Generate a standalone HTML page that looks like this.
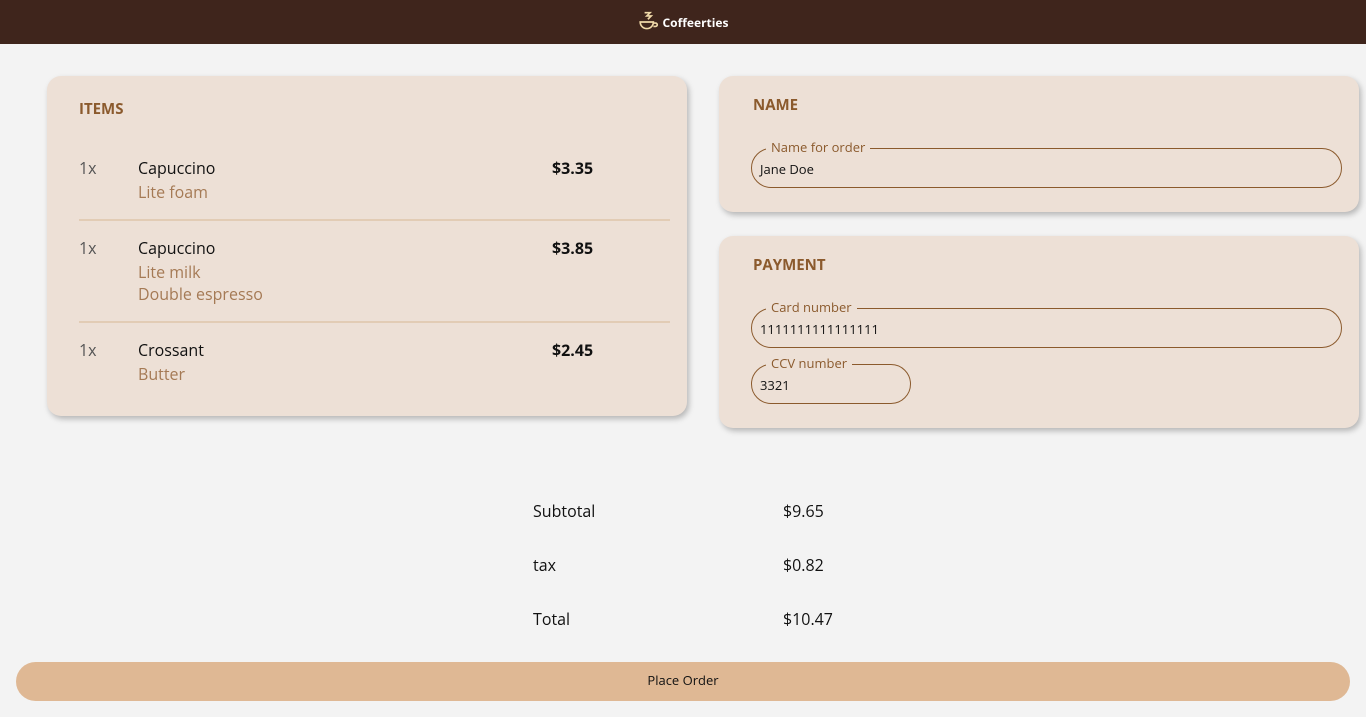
<!DOCTYPE html>
<html><head><style>
*{box-sizing:border-box;margin:0;padding:0}
body{width:1366px;height:717px;background:#f3f3f3;font-family:"Open Sans","Liberation Sans","DejaVu Sans",sans-serif;position:relative;overflow:hidden;color:#111}
.hdr{position:absolute;left:0;top:0;width:1366px;height:44px;background:#3f251c;color:#fff;font-size:12px;font-weight:bold;display:flex;align-items:center;justify-content:center}
.card{position:absolute;background:#ede0d6;border-radius:14px;box-shadow:2px 3px 6px rgba(0,0,0,.25)}
h3{position:absolute;font-size:15px;font-weight:bold;color:#8b5a2d}
.t{position:absolute;font-size:16px;margin-top:-1px}
.m{color:#a57a55}
.q{color:#555}
.line{position:absolute;left:32px;width:591px;height:2px;background:#e2ccb5}
.fld{position:absolute;border:1px solid #8b5a2d;border-radius:20px;height:40px;font-size:13px;padding:11px 0 0 8px}
.fld span{position:absolute;top:-11px;left:14px;background:#ede0d6;padding:0 5px;font-size:13px;color:#8b5a2d}
.btn{position:absolute;left:16px;top:662px;width:1334px;height:39px;background:#dfb894;border-radius:20px;font-size:13px;text-align:center;line-height:37px}
</style></head><body>
<div class="hdr"><svg width="22" height="22" viewBox="0 0 20 20" style="margin-right:3px" fill="none" stroke="#f0d9a8" stroke-width="1.5"><path d="M6 1.5h5l-3 3h4l-3 3"/><path d="M2 10h12a6 6 0 0 1-12 0z"/><path d="M14 11h2a1.5 1.5 0 0 1 0 3h-2"/></svg>Coffeerties</div>

<div class="card" style="left:47px;top:76px;width:640px;height:340px">
<h3 style="left:32px;top:23px">ITEMS</h3>
<div class="t q" style="left:32px;top:82px">1x</div>
<div class="t" style="left:91px;top:82px">Capuccino</div>
<div class="t m" style="left:91px;top:106px">Lite foam</div>
<div class="t" style="left:505px;top:82px;font-weight:bold">$3.35</div>
<div class="line" style="top:143px"></div>
<div class="t q" style="left:32px;top:162px">1x</div>
<div class="t" style="left:91px;top:162px">Capuccino</div>
<div class="t m" style="left:91px;top:186px">Lite milk</div>
<div class="t m" style="left:91px;top:208px">Double espresso</div>
<div class="t" style="left:505px;top:162px;font-weight:bold">$3.85</div>
<div class="line" style="top:245px"></div>
<div class="t q" style="left:32px;top:264px">1x</div>
<div class="t" style="left:91px;top:264px">Crossant</div>
<div class="t m" style="left:91px;top:288px">Butter</div>
<div class="t" style="left:505px;top:264px;font-weight:bold">$2.45</div>
</div>

<div class="card" style="left:719px;top:76px;width:640px;height:136px">
<h3 style="left:34px;top:19px">NAME</h3>
<div class="fld" style="left:32px;top:72px;width:591px"><span>Name for order</span>Jane Doe</div>
</div>

<div class="card" style="left:719px;top:236px;width:640px;height:192px">
<h3 style="left:34px;top:19px">PAYMENT</h3>
<div class="fld" style="left:32px;top:72px;width:591px"><span>Card number</span>1111111111111111</div>
<div class="fld" style="left:32px;top:128px;width:160px"><span>CCV number</span>3321</div>
</div>

<div class="t" style="left:533px;top:501px">Subtotal</div><div class="t" style="left:783px;top:501px">$9.65</div>
<div class="t" style="left:533px;top:555px">tax</div><div class="t" style="left:783px;top:555px">$0.82</div>
<div class="t" style="left:533px;top:609px">Total</div><div class="t" style="left:783px;top:609px">$10.47</div>

<div class="btn">Place Order</div>
</body></html>
